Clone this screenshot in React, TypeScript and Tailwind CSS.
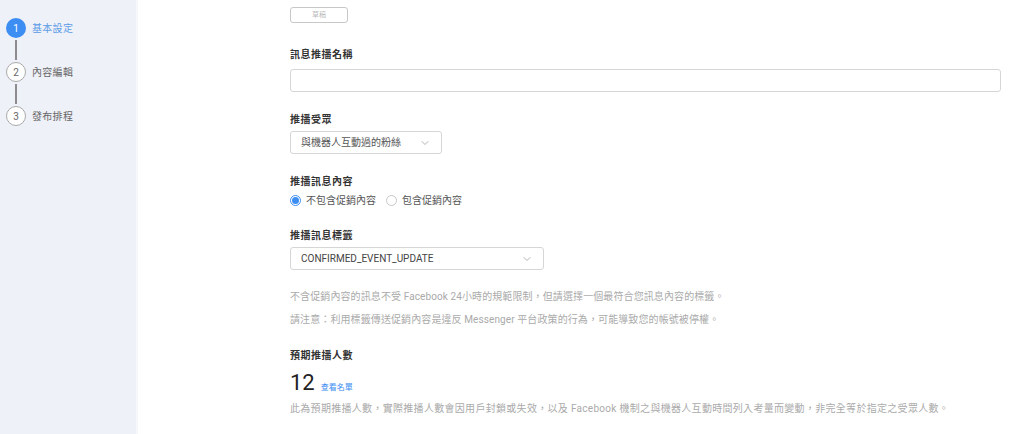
import { ChevronDown } from 'lucide-react';

const font = { fontFamily: 'Roboto, "Noto Sans CJK TC", sans-serif' };

const steps = [
  { n: 1, label: '基本設定', active: true },
  { n: 2, label: '內容編輯', active: false },
  { n: 3, label: '發布排程', active: false },
];

const Label = ({ children }: { children: string }) => (
  <div className="text-[10px] leading-[14px] font-bold text-[#333] tracking-[0.5px]">{children}</div>
);

const App = () => {
  return (
    <div className="flex h-[434px] w-full overflow-hidden bg-white" style={font}>
      {/* 左側步驟 */}
      <aside className="w-[138px] shrink-0 bg-[#eef1f8] border-r-2 border-[#f5f7fb] pt-[18px] pl-[6px]">
        {steps.map((s, i) => (
          <div key={s.n}>
            <div className="flex items-center gap-[6px]">
              <div
                className={
                  s.active
                    ? 'flex h-[20px] w-[20px] items-center justify-center rounded-full bg-[#3d8ef2] text-[10px] text-white'
                    : 'flex h-[20px] w-[20px] items-center justify-center rounded-full border border-[#a9a9a9] bg-white text-[10px] text-[#666]'
                }
              >
                {s.n}
              </div>
              <span className={s.active ? 'text-[10px] text-[#5b9be6] tracking-[0.3px]' : 'text-[10px] text-[#666] tracking-[0.3px]'}>{s.label}</span>
            </div>
            {i < steps.length - 1 && (
              <div className="flex h-[24px] w-[20px] justify-center py-[2px]">
                <div className="w-[1.5px] bg-[#8c8c8c]" />
              </div>
            )}
          </div>
        ))}
      </aside>

      {/* 主要內容 */}
      <main className="flex-1 pl-[152px] pr-[23px] pt-[7px]">
        <div className="flex h-[16px] w-[58px] items-center justify-center rounded-[3px] border border-[#c8c8c8] text-[7px] text-[#bbb]">
          草稿
        </div>

        <div className="mt-[25px]">
          <Label>訊息推播名稱</Label>
          <div className="mt-[7px] h-[23px] w-full rounded-[3px] border border-[#d6d6d6]" />
        </div>

        <div className="mt-[21px]">
          <Label>推播受眾</Label>
          <div className="mt-[4px] flex h-[23px] w-[152px] items-center justify-between rounded-[3px] border border-[#d6d6d6] pl-[10px] pr-[10px]">
            <span className="text-[10px] text-[#555]">與機器人互動過的粉絲</span>
            <ChevronDown size={12} strokeWidth={1.5} className="text-[#999]" />
          </div>
        </div>

        <div className="mt-[21px]">
          <Label>推播訊息內容</Label>
          <div className="mt-[4px] flex h-[14px] items-center text-[10px] text-[#555]">
            <span className="flex h-[11px] w-[11px] items-center justify-center rounded-full border border-[#3d8ef2]">
              <span className="h-[7px] w-[7px] rounded-full bg-[#3d8ef2]" />
            </span>
            <span className="ml-[5px]">不包含促銷內容</span>
            <span className="ml-[10px] h-[11px] w-[11px] rounded-full border border-[#c8c8c8]" />
            <span className="ml-[5px]">包含促銷內容</span>
          </div>
        </div>

        <div className="mt-[22px]">
          <Label>推播訊息標籤</Label>
          <div className="mt-[4px] flex h-[23px] w-[254px] items-center justify-between rounded-[3px] border border-[#d6d6d6] pl-[10px] pr-[10px]">
            <span className="text-[10px] text-[#444]">CONFIRMED_EVENT_UPDATE</span>
            <ChevronDown size={12} strokeWidth={1.5} className="text-[#999]" />
          </div>
        </div>

        <div className="mt-[20px] text-[10px] leading-[14px] text-[#aaa] tracking-[0.1px]">
          <p>不含促銷內容的訊息不受 Facebook 24小時的規範限制，但請選擇一個最符合您訊息內容的標籤。</p>
          <p className="mt-[9px]">請注意：利用標籤傳送促銷內容是違反 Messenger 平台政策的行為，可能導致您的帳號被停權。</p>
        </div>

        <div className="mt-[22px]">
          <Label>預期推播人數</Label>
          <div className="mt-[6px] flex items-baseline gap-[6px]">
            <span className="text-[22px] leading-[28px] text-[#222]">12</span>
            <span className="text-[8px] text-[#3d8ef2]">查看名單</span>
          </div>
          <p className="mt-[5px] text-[10px] leading-[14px] text-[#aaa] tracking-[0.3px]">
            此為預期推播人數，實際推播人數會因用戶封鎖或失效，以及 Facebook 機制之與機器人互動時間列入考量而變動，非完全等於指定之受眾人數。
          </p>
        </div>
      </main>
    </div>
  );
};

export default App;
